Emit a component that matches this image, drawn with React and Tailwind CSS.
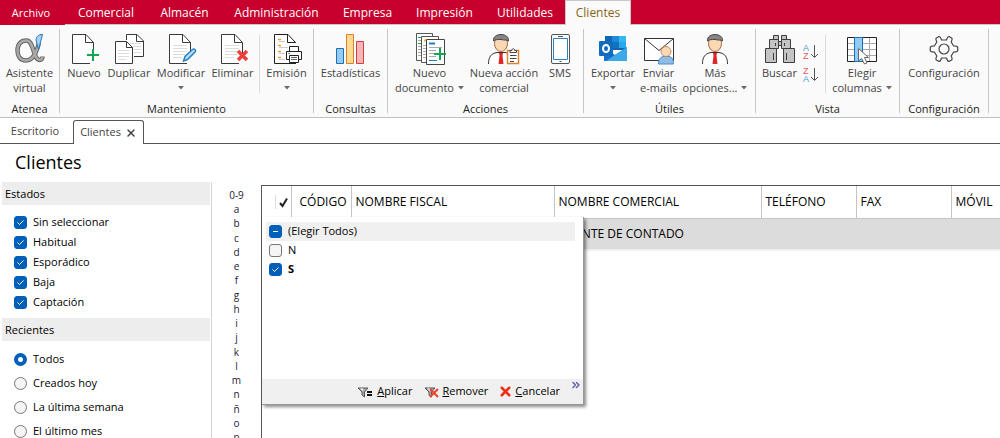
import React, { useState, useEffect, useRef } from 'react'
import { X, ChevronsRight } from 'lucide-react'

const menuTabs = [
  { label: 'Comercial', width: 'w-[82px]' },
  { label: 'Almacén', width: 'w-[75px]' },
  { label: 'Administración', width: 'w-[109px]' },
  { label: 'Empresa', width: 'w-[73px]' },
  { label: 'Impresión', width: 'w-[81px]' },
  { label: 'Utilidades', width: 'w-[80px]' },
]

const estados = ['Sin seleccionar', 'Habitual', 'Esporádico', 'Baja', 'Captación']
const recientes = ['Todos', 'Creados hoy', 'La última semana', 'El último mes']
const letters = ['0-9', ...'abcdefghijklmnñop']

const columns = [
  { label: 'CÓDIGO', width: 'w-[60px]', align: 'text-right' },
  { label: 'NOMBRE FISCAL', width: 'w-[203px]', align: 'text-left' },
  { label: 'NOMBRE COMERCIAL', width: 'w-[207px]', align: 'text-left' },
  { label: 'TELÉFONO', width: 'w-[95px]', align: 'text-left' },
  { label: 'FAX', width: 'w-[95px]', align: 'text-left' },
  { label: 'MÓVIL', width: '', align: 'text-left' },
]

/* ---------- icons, all drawn on a 32x32 box ---------- */

function Icon({ children, className = 'size-8' }) {
  return (
    <svg viewBox="0 0 32 32" fill="none" className={className} aria-hidden="true">
      {children}
    </svg>
  )
}

function Sheet({ lines = true }) {
  return (
    <>
      <path d="M21.5 30.5H4.500V1.500H17.500L25.500 9.500V21" fill="#fff" />
      <path d="M22 30.500H4.500V1.500H18L25.500 9.500V20" stroke="#3a3a3a" />
      <path d="M17.500 1.500V9.500H25.500" stroke="#3a3a3a" />
      {lines && <path d="M8 12.500H22M8 15.500H22M8 18.500H22M8 21.500H20M8 24.500H17" stroke="#dcdcdc" />}
    </>
  )
}

function AlphaIcon() {
  return (
    <Icon>
      <path
        d="M25 10C23 17 20 27.500 12 27.500C6 27.500 3.500 23 3.500 17.500C3.500 11 7 7.500 12.500 7.500C20 7.500 19 26.500 25.500 27C27.500 27 28.500 25 28.500 23.500"
        stroke="#666"
        strokeWidth="4.500"
      />
      <path
        d="M25 10C23 17 20 27.500 12 27.500C6 27.500 3.500 23 3.500 17.500C3.500 11 7 7.500 12.500 7.500C20 7.500 19 26.500 25.500 27C27.500 27 28.500 25 28.500 23.500"
        stroke="#a9a9a9"
        strokeWidth="2.500"
      />
      <path d="M22 7C22.500 3.500 24 1.500 28.500 1.500L24.500 16.500Z" fill="#a5d3f3" stroke="#2478b8" />
    </Icon>
  )
}

function NewIcon() {
  return (
    <Icon>
      <Sheet lines={false} />
      <path d="M24.500 16V28M18.500 22H31" stroke="#fafafa" strokeWidth="4" />
      <path d="M25 16V28M19 22H31" stroke="#14a652" strokeWidth="2" />
    </Icon>
  )
}

function DuplicateIcon() {
  return (
    <Icon>
      <path d="M13.500 7V1.500H24L30.500 8V23.500H21" fill="#fff" stroke="#3a3a3a" />
      <path d="M23.500 1.500V8.500H30.500" stroke="#3a3a3a" />
      <path d="M17 10.500H28M20 13.500H28M21 16.500H28M21 19.500H28" stroke="#ddd" />
      <path d="M2.500 8.500H13.500L19.500 14.500V30.500H2.500Z" fill="#fff" stroke="#3a3a3a" />
      <path d="M13.500 8.500V14.500H19.500" stroke="#3a3a3a" />
      <path d="M5 17.500H16M5 20.500H16M5 23.500H16M5 26.500H13" stroke="#ddd" />
    </Icon>
  )
}

function EditIcon() {
  return (
    <Icon>
      <Sheet />
      <path d="M18.500 28L20 23.500L27.500 16.500C29 15.300 31.500 17 30 19L22.500 26.500Z" fill="#b8dcf5" stroke="#2883c4" strokeWidth="1.500" />
    </Icon>
  )
}

function DeleteIcon() {
  return (
    <Icon>
      <Sheet />
      <path d="M21 18L30 27M30 18L21 27" stroke="#ee3f3a" strokeWidth="3.500" />
    </Icon>
  )
}

function PrintIcon() {
  return (
    <Icon>
      <path d="M24 30.500H3.500V1.500H16.500L24.500 9.500V13" fill="#fff" />
      <path d="M25 30.500H3.500V1.500H17L24.500 9.500V10" stroke="#222" />
      <path d="M16.500 1.500V9.500H24.500" stroke="#222" />
      <path d="M7 6.500H10M7 12.500H10M7 18.500H10M7 24.500H10" stroke="#f0a030" strokeWidth="1.500" />
      <path d="M8 8.500H14M8 14.500H17M8 20.500H14M8 26.500H14" stroke="#ccc" />
      <path d="M18.500 18V13.500H27.500V18" fill="#fff" stroke="#222" />
      <path d="M15.500 18.500H30.500V26.500H15.500Z" fill="#fff" stroke="#222" />
      <path d="M18.500 22.500H27.500V29.500H18.500Z" fill="#fff" stroke="#222" />
      <path d="M20 24.500H26M20 26.500H26" stroke="#666" />
      <path d="M17 20.500H19" stroke="#3c96d8" />
    </Icon>
  )
}

function StatsIcon() {
  return (
    <Icon>
      <path d="M1.500 15.500H8.500V30.500H1.500Z" fill="#94cbf2" stroke="#1b6fb3" />
      <path d="M11.500 1.500H18.500V30.500H11.500Z" fill="#f9dc90" stroke="#e08030" />
      <path d="M21.500 8.500H28.500V30.500H21.500Z" fill="#f3b6b9" stroke="#dd3a3e" />
    </Icon>
  )
}

function NewDocumentIcon() {
  return (
    <Icon>
      <path d="M2.500 .5H18.500V27.500H2.500Z" fill="#fff" stroke="#555" />
      <path d="M4 4.500H8M4 10.500H7" stroke="#20a455" />
      <path d="M4 7.500H7M4 13.500H7M4 16.500H7M4 19.500H7M4 22.500H7" stroke="#aaa" />
      <path d="M7.500 3.500H24.500V29.500H7.500Z" fill="#fff" stroke="#555" />
      <path d="M10 7.500H14" stroke="#f0b030" strokeWidth="2" />
      <path d="M9 12.500H12M9 15.500H12M9 18.500H12M9 21.500H12M9 24.500H12" stroke="#aaa" />
      <path d="M12.500 6.500H30.500V31.500H12.500Z" fill="#fff" stroke="#444" />
      <path d="M15 10.500H21" stroke="#1b80c4" strokeWidth="2" />
      <path d="M15 14.500H28M15 17.500H22M15 20.500H20M15 23.500H22" stroke="#aaa" />
      <path d="M15 27.500H23" stroke="#1b80c4" />
      <path d="M26 15V27M20 21H32" stroke="#14a652" strokeWidth="2" />
    </Icon>
  )
}

function Person() {
  return (
    <>
      <path d="M3.500 31C3.500 24 6 20.500 12 19.500H20C26 20.500 28.500 24 28.500 31" fill="#fff" stroke="#333" />
      <path d="M14 20H18L17.500 22.500L18.500 31H13.500L14.500 22.500Z" fill="#e0252c" />
      <ellipse cx="16" cy="10.500" rx="6.500" ry="8" fill="#fbd7b4" stroke="#a8683e" />
      <path d="M8.500 8C8 3.500 12 1.500 16 1.500C20.500 1.500 24 4 23.500 8C22 6.500 20 7.500 16 6.500C12.500 6.500 10 6.500 8.500 8Z" fill="#858585" stroke="#444" />
    </>
  )
}

function PersonIcon() {
  return (
    <Icon>
      <Person />
    </Icon>
  )
}

function ActionIcon() {
  return (
    <Icon>
      <g transform="translate(-3 0)">
        <Person />
      </g>
      <path d="M19.500 17.500H30.500V30.500H19.500Z" fill="#fff" stroke="#dd8430" strokeWidth="1.500" />
      <path d="M22 19.500V17.500H24C24 15 26.500 15 26.500 17.500H28.500V19.500Z" fill="#fff" stroke="#444" />
      <path d="M22 22.500H28.500M22 25.500H28.500M22 28.500H26" stroke="#444" />
    </Icon>
  )
}

function PhoneIcon() {
  return (
    <Icon>
      <rect x="7.500" y="1.500" width="18" height="29" rx="1.500" fill="#fff" stroke="#555" />
      <path d="M9.500 5.500H23.500V26.500H9.500Z" fill="#fff" stroke="#2883c4" />
      <path d="M14 3.500H19M15.500 28.500H17.500" stroke="#555" />
    </Icon>
  )
}

function OutlookIcon() {
  return (
    <Icon>
      <path d="M8 3H29V17H8Z" fill="#1066b5" />
      <path d="M15 3H22V9H15Z" fill="#1c8ad8" />
      <path d="M22 3H29V9H22Z" fill="#35b8f1" />
      <path d="M15 9H22V15H15Z" fill="#1473bd" />
      <path d="M22 9H29V15H22Z" fill="#2aa7ea" />
      <path d="M7 15L18 22L30 14V28H7Z" fill="#1a6fc4" />
      <path d="M30 14V28H9Z" fill="#3ba9e8" />
      <rect x="2" y="8" width="14" height="15" rx="1" fill="#0f6cc0" />
      <ellipse cx="9" cy="15.500" rx="3" ry="3.500" stroke="#fff" strokeWidth="2" />
    </Icon>
  )
}

function MailIcon() {
  return (
    <Icon>
      <path d="M1.500 5.500H30.500V27.500H1.500Z" fill="#fff" stroke="#333" />
      <path d="M1.500 5.500L16 17.500L30.500 5.500" stroke="#333" />
      <path d="M15.500 31C15.500 25.500 18 24 20 23.500H26C29 24 30.500 26.500 30.500 31Z" fill="#8dbde6" stroke="#4a8cc6" />
      <circle cx="23" cy="18.500" r="5" fill="#fbd7b4" stroke="#c98a5c" />
    </Icon>
  )
}

function BinocularsIcon() {
  return (
    <Icon>
      <g fill="#c4c4c4" stroke="#3d3d3d">
        <path d="M9.500 2.500H14.500V7.500H9.500ZM17.500 2.500H22.500V7.500H17.500Z" />
        <path d="M14.500 8.500H17.500V12.500H14.500Z" />
        <path d="M5.500 6.500H14.500V15.500H5.500ZM17.500 6.500H26.500V15.500H17.500Z" />
        <path d="M1.500 15.500H12.500V29.500H1.500ZM19.500 15.500H30.500V29.500H19.500Z" />
      </g>
      <path d="M11.500 10V13M20.500 10V13M9.500 20V27M22.500 20V27" stroke="#3d3d3d" />
    </Icon>
  )
}

function ColumnsIcon() {
  return (
    <Icon>
      <path d="M1.500 4.500H30.500V28.500H1.500Z" fill="#fff" stroke="#222" />
      <path d="M2 10.500H30M2 16.500H30M2 22.500H30M23.500 5V28" stroke="#aaa" />
      <path d="M8.500 4.500H16.500V28.500H8.500Z" fill="#94cbf2" stroke="#1b6fb3" />
      <path d="M12.500 15.500V28L15.500 25.500L18.500 31L21 30L18.500 24.500H22.500Z" fill="#fff" stroke="#666" />
    </Icon>
  )
}

function GearIcon() {
  return (
    <Icon>
      <path
        d="M13.500 7Q12.500 3.500 11 3.500L8 5.200Q7.500 6.500 8.800 9L6.500 12.800Q2.500 13 2.300 14.300V17.700Q2.500 19 6.500 19.200L8.800 23Q7.500 25.500 8 26.800L11 28.500Q12.500 28.500 13.500 25H18.500Q19.500 28.500 21 28.500L24 26.800Q24.500 25.500 23.200 23L25.500 19.200Q29.500 19 29.700 17.700V14.300Q29.500 13 25.500 12.800L23.200 9Q24.500 6.500 24 5.200L21 3.500Q19.500 3.500 18.500 7Z"
        stroke="#444"
        strokeWidth="1.200"
        strokeLinejoin="round"
      />
      <circle cx="16" cy="16" r="5" stroke="#444" strokeWidth="1.200" />
    </Icon>
  )
}

function SortIcon({ first, second }) {
  return (
    <svg viewBox="0 0 16 18" className="h-[18px] w-4" fill="none" aria-hidden="true">
      <text x="0" y="8" fontSize="9" fill={first === 'A' ? '#4a9ad4' : '#e8595c'} fontFamily="Liberation Sans">{first}</text>
      <text x="0" y="16" fontSize="9" fill={second === 'A' ? '#4a9ad4' : '#e8595c'} fontFamily="Liberation Sans">{second}</text>
      <path d="M11.500 2V14M8 11L11.500 14.500L15 11" stroke="#555" />
    </svg>
  )
}

function FunnelIcon({ remove }) {
  return (
    <svg viewBox="0 0 16 14" className="h-[14px] w-4" fill="none" aria-hidden="true">
      <path d="M1 3H11L7.500 7V12L5 10V7Z" fill="#aaa" stroke="#555" />
      <path d="M3 3.500H6L6 6Z" fill="#fff" />
      {remove ? (
        <path d="M6 4L14 12M14 4L6 12" stroke="#e8432a" strokeWidth="2" />
      ) : (
        <path d="M10 7H15M10 10H15" stroke="#111" strokeWidth="2" />
      )}
    </svg>
  )
}

function Arrow() {
  return (
    <svg viewBox="0 0 6 4" className="h-1 w-[6px]" aria-hidden="true">
      <path d="M0 0H6L3 3.500Z" fill="#6a6a6a" />
    </svg>
  )
}

/* ---------- ribbon ---------- */

function RibbonButton({ icon, label, label2, arrow, width }) {
  return (
    <button
      type="button"
      className={`${width} flex shrink-0 flex-col items-center text-[11px] leading-[15px] whitespace-nowrap text-[#444]`}
    >
      {icon}
      <span>{label}</span>
      {(label2 || arrow) && (
        <span className="flex h-[15px] items-center gap-1">
          {label2}
          {arrow && <Arrow />}
        </span>
      )}
    </button>
  )
}

function RibbonGroup({ title, width, children }) {
  return (
    <section
      aria-label={title}
      className={`${width} flex h-[84px] shrink-0 flex-col justify-between border-r border-[#c6c6c6]`}
    >
      <div className="flex justify-center pt-1">{children}</div>
      <h2 className="text-center text-[11px] leading-[8px] text-[#222]">{title}</h2>
    </section>
  )
}

function Divider() {
  return <div className="mx-[3px] mt-[2px] h-[58px] w-px bg-[#dcdcdc]" />
}

function Ribbon() {
  return (
    <div className="flex h-[93px] shrink-0 border-b border-[#c0c0c0] bg-[#fafafa] pt-1">
      <RibbonGroup title="Atenea" width="w-[60px]">
        <RibbonButton width="w-[56px]" icon={<AlphaIcon />} label="Asistente" label2="virtual" />
      </RibbonGroup>
      <RibbonGroup title="Mantenimiento" width="w-[254px]">
        <RibbonButton width="w-[43px]" icon={<NewIcon />} label="Nuevo" />
        <RibbonButton width="w-[47px]" icon={<DuplicateIcon />} label="Duplicar" />
        <RibbonButton width="w-[57px]" icon={<EditIcon />} label="Modificar" arrow />
        <RibbonButton width="w-[46px]" icon={<DeleteIcon />} label="Eliminar" />
        <Divider />
        <RibbonButton width="w-[48px]" icon={<PrintIcon />} label="Emisión" arrow />
      </RibbonGroup>
      <RibbonGroup title="Consultas" width="w-[74px]">
        <RibbonButton width="w-[70px]" icon={<StatsIcon />} label="Estadísticas" />
      </RibbonGroup>
      <RibbonGroup title="Acciones" width="w-[196px]">
        <RibbonButton width="w-[73px]" icon={<NewDocumentIcon />} label="Nuevo" label2="documento" arrow />
        <RibbonButton width="w-[76px]" icon={<ActionIcon />} label="Nueva acción" label2="comercial" />
        <RibbonButton width="w-[36px]" icon={<PhoneIcon />} label="SMS" />
      </RibbonGroup>
      <RibbonGroup title="Útiles" width="w-[172px]">
        <RibbonButton width="w-[51px]" icon={<OutlookIcon />} label="Exportar" arrow />
        <RibbonButton width="w-[40px]" icon={<MailIcon />} label="Enviar" label2="e-mails" />
        <RibbonButton width="w-[73px]" icon={<PersonIcon />} label="Más" label2="opciones..." arrow />
      </RibbonGroup>
      <RibbonGroup title="Vista" width="w-[144px]">
        <RibbonButton width="w-[40px]" icon={<BinocularsIcon />} label="Buscar" />
        <div className="flex w-[22px] flex-col items-center gap-[5px] pt-[10px]">
          <button type="button" aria-label="Orden ascendente"><SortIcon first="A" second="Z" /></button>
          <button type="button" aria-label="Orden descendente"><SortIcon first="Z" second="A" /></button>
        </div>
        <Divider />
        <RibbonButton width="w-[67px]" icon={<ColumnsIcon />} label="Elegir" label2="columnas" arrow />
      </RibbonGroup>
      <RibbonGroup title="Configuración" width="w-[89px]">
        <RibbonButton width="w-[84px]" icon={<GearIcon />} label="Configuración" />
      </RibbonGroup>
    </div>
  )
}

/* ---------- form controls ---------- */

function Check({ label, defaultChecked, indeterminate, className = '' }) {
  const [checked, setChecked] = useState(!!defaultChecked)
  const ref = useRef(null)

  useEffect(() => {
    ref.current.indeterminate = !!indeterminate
  }, [indeterminate])

  const on = checked || indeterminate
  return (
    <label className={`flex items-center gap-[6px] text-black ${className}`}>
      <span className="grid size-[13px] shrink-0 place-items-center">
        <input
          ref={ref}
          type="checkbox"
          checked={checked}
          onChange={(e) => setChecked(e.target.checked)}
          className={`col-start-1 row-start-1 size-[13px] appearance-none rounded-[3px] border ${
            on ? 'border-[#005fb8] bg-[#005fb8]' : 'border-[#777] bg-[#f5f5f5]'
          }`}
        />
        {on && (
          <svg viewBox="0 0 13 13" className="pointer-events-none col-start-1 row-start-1 size-[13px]" fill="none" aria-hidden="true">
            <path d={indeterminate ? 'M4 6.500H9' : 'M3.500 6.500L5.500 8.500L9.500 4.500'} stroke="#fff" />
          </svg>
        )}
      </span>
      {label}
    </label>
  )
}

function Sidebar() {
  return (
    <aside className="w-[212px] shrink-0 border-r border-[#d4d4d4] pr-px pl-[2px] text-[11px]">
      <h2 className="bg-[#ededed] px-[3px] leading-[23px] text-black">Estados</h2>
      <div className="px-3 pt-[7px] pb-[6px]">
        {estados.map((name) => (
          <Check key={name} label={name} defaultChecked className="h-5" />
        ))}
      </div>
      <h2 className="bg-[#ededed] px-[3px] leading-[23px] text-black">Recientes</h2>
      <div className="px-3 pt-[6px]">
        {recientes.map((name, i) => (
          <label key={name} className="flex h-6 items-center gap-[6px] text-black">
            <input
              type="radio"
              name="recientes"
              defaultChecked={i === 0}
              className="size-[13px] appearance-none rounded-full border border-[#777] bg-[#f5f5f5] checked:border-4 checked:border-[#005fb8] checked:bg-white"
            />
            {name}
          </label>
        ))}
      </div>
    </aside>
  )
}

function FilterPopup() {
  return (
    <div
      role="dialog"
      aria-label="Filtro"
      className="absolute top-[31px] left-0 flex h-[188px] w-[322px] flex-col justify-between border-r border-b border-[#999] bg-white text-[11px] shadow-[2px_2px_3px_rgba(0,0,0,0.45)]"
    >
      <div className="pt-[5px] pr-2 pl-1">
        <Check label="(Elegir Todos)" indeterminate className="h-[19px] bg-[#f0f0f0] pl-[3px]" />
        <Check label="N" className="h-[19px] pl-[3px]" />
        <Check label="S" defaultChecked className="h-[19px] pl-[3px] font-bold" />
      </div>
      <div className="flex h-[25px] items-center justify-end bg-[#f0f0f0] text-black">
        <button type="button" className="mr-3 flex items-center gap-1">
          <FunnelIcon />
          <span><u>A</u>plicar</span>
        </button>
        <button type="button" className="mr-[10px] flex items-center gap-[2px]">
          <FunnelIcon remove />
          <span><u>R</u>emover</span>
        </button>
        <button type="button" className="mr-[10px] flex items-center gap-[2px]">
          <X className="size-[15px] text-[#ee2d12]" strokeWidth={4} />
          <span><u>C</u>ancelar</span>
        </button>
        <button type="button" aria-label="Más" className="self-start pr-px">
          <ChevronsRight className="size-3 text-[#6262b5]" strokeWidth={3} />
        </button>
      </div>
    </div>
  )
}

function ClientTable() {
  return (
    <div className="relative min-w-0 grow border-t border-l border-[#555]">
      <table className="w-full table-fixed border-collapse text-[12px] text-black">
        <thead>
          <tr className="h-8 border-b border-[#c4c4c4]">
            <th className="w-[29px] border-r border-[#c4c4c4] p-0" aria-label="Activo">
              <div className="ml-[13px] flex h-[14px] items-center border-l border-[#ddd] pl-[2px]">
                <svg viewBox="0 0 12 12" className="size-3" fill="none" aria-hidden="true">
                  <path d="M2 7L4.500 10L9 2.500" stroke="#222" strokeWidth="2" />
                </svg>
              </div>
            </th>
            {columns.map((col) => (
              <th
                key={col.label}
                className={`${col.width} ${col.align} border-r border-[#c4c4c4] px-1 py-0 font-normal whitespace-nowrap last:border-r-0`}
              >
                {col.label}
              </th>
            ))}
          </tr>
        </thead>
        <tbody>
          <tr className="h-8 border-b-2 border-[#f0f0f0] bg-[#dcdcdc]">
            <td />
            <td />
            <td />
            <td className="px-1 py-0 whitespace-nowrap" colSpan={4}>CLIENTE DE CONTADO</td>
          </tr>
        </tbody>
      </table>
      <FilterPopup />
    </div>
  )
}

export default function App() {
  return (
    <div className="flex h-screen flex-col overflow-hidden bg-white font-['Open_Sans','Noto_Sans',sans-serif]">
      <nav className="flex h-[25px] shrink-0 bg-[#c8002d] text-[12px] text-white">
        <button type="button" className="w-[65px] pt-px pr-[3px] text-[11px]">Archivo</button>
        {menuTabs.map((tab) => (
          <button key={tab.label} type="button" className={`${tab.width} border-b border-[#c8c8c8] pt-[2px]`}>
            {tab.label}
          </button>
        ))}
        <button type="button" className="w-[66px] border-x border-t border-[#c8c8c8] bg-[#fafafa] text-[#866414]">
          Clientes
        </button>
        <div className="grow border-b border-[#c8c8c8]" />
      </nav>
      <Ribbon />

      <div className="flex h-[26px] shrink-0 items-end text-[11px] text-[#444]">
        <button type="button" className="h-full w-[73px] border-b border-[#555] pt-[2px] pr-[3px]">Escritorio</button>
        <div className="flex h-6 w-[71px] items-center justify-center gap-1 rounded-t-[3px] border border-b-0 border-[#555]">
          <button type="button">Clientes</button>
          <button type="button" aria-label="Cerrar"><X className="size-3" strokeWidth={3} /></button>
        </div>
        <div className="h-full grow border-b border-[#555]" />
      </div>

      <h1 className="shrink-0 px-[15px] pb-[2px] text-[18px] leading-[36px] text-black">Clientes</h1>

      <main className="flex min-h-0 grow">
        <Sidebar />
        <ul className="mt-[6px] flex h-[256px] w-[49px] shrink-0 flex-col justify-between text-center text-[10px] leading-[14px] text-[#223]">
          {letters.map((l) => (
            <li key={l}><button type="button">{l}</button></li>
          ))}
        </ul>
        <div className="flex min-w-0 grow pt-[3px]">
          <ClientTable />
        </div>
      </main>
    </div>
  )
}
